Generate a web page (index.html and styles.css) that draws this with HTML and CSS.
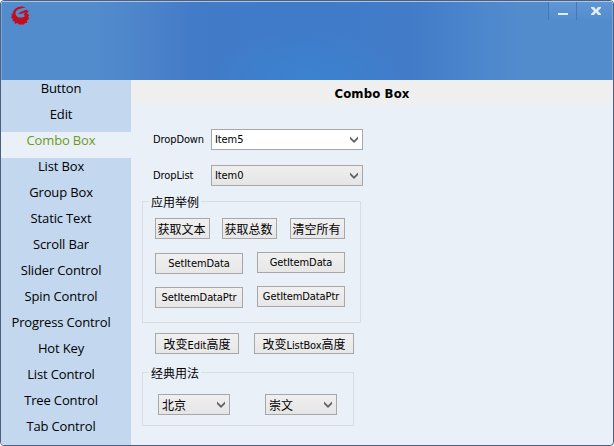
FILE: index.html
```html
<!DOCTYPE html>
<html lang="zh-CN">
<head>
<meta charset="utf-8">
<title>Combo Box</title>
<link rel="stylesheet" href="styles.css">
</head>
<body>
<div class="window">
  <header class="titlebar">
    <svg class="logo" width="20" height="20" viewBox="0 0 20 20">
      <path fill="#c40d1a" d="M16 1.500C12 -.3 7 .8 4.500 3.500C3 5 2.500 7 2.500 8.500L1 8L2 10L.8 11.500L3 13L2.500 15L4.500 15.500L5 18L7.500 17L9 18.500L14 18.500L15 17L17 17L17 14.500L19 13L18.300 10.500L19.300 9L17 7.500L19 4.500L17 5L17.500 3.500C14 4.500 11 5.500 8 7.500L10.500 8L15.500 6.500L13.500 8.500L15 10C13 12 8.500 12 6.500 10C4.500 7.500 5.500 5 8 3.500C10.500 2 13 2 16 1.500Z"/>
    </svg>
    <div class="controls">
      <button class="control min" aria-label="最小化"><svg width="28" height="20"><path d="M9 12h10v2H9z" fill="#deeefa"/></svg></button>
      <button class="control close" aria-label="关闭"><svg width="36" height="20"><path d="M14 6h3l2 2.500L21 6h3v1l-3 3L24 13v1h-3l-2-2.500L17 14h-3v-1l3-3L14 7z" fill="#deeefa"/></svg></button>
    </div>
  </header>
  <div class="body">
    <nav class="sidebar">
      <a>Button</a><a>Edit</a><a class="active">Combo Box</a><a>List Box</a><a>Group Box</a><a>Static Text</a><a>Scroll Bar</a><a>Slider Control</a><a>Spin Control</a><a>Progress Control</a><a>Hot Key</a><a>List Control</a><a>Tree Control</a><a>Tab Control</a>
    </nav>
    <main class="page">
      <h1>Combo Box</h1>
      <div class="form">
        <div class="field"><label>DropDown</label><div class="combo editable"><span>Item5</span><svg class="arrow" width="8" height="7"><path d="M0 0.500L4 4.500L8 0.500V3L4 7L0 3z"/></svg></div></div>
        <div class="field"><label>DropList</label><div class="combo"><span>Item0</span><svg class="arrow" width="8" height="7"><path d="M0 0.500L4 4.500L8 0.500V3L4 7L0 3z"/></svg></div></div>
        <fieldset class="group examples">
          <legend>应用举例</legend>
          <div class="row texts"><button class="btn cjk">获取文本</button><button class="btn cjk">获取总数</button><button class="btn cjk">清空所有</button></div>
          <div class="row data"><button class="btn">SetItemData</button><button class="btn">GetItemData</button></div>
          <div class="row data"><button class="btn">SetItemDataPtr</button><button class="btn">GetItemDataPtr</button></div>
        </fieldset>
        <div class="row heights"><button class="btn mixed"><b>改变</b>Edit<b>高度</b></button><button class="btn mixed wide"><b>改变</b>ListBox<b>高度</b></button></div>
        <fieldset class="group classic">
          <legend>经典用法</legend>
          <div class="row cities">
            <div class="combo cjk"><span>北京</span><svg class="arrow" width="8" height="7"><path d="M0 0.500L4 4.500L8 0.500V3L4 7L0 3z"/></svg></div>
            <div class="combo cjk"><span>崇文</span><svg class="arrow" width="8" height="7"><path d="M0 0.500L4 4.500L8 0.500V3L4 7L0 3z"/></svg></div>
          </div>
        </fieldset>
      </div>
    </main>
  </div>
</div>
</body>
</html>
```
FILE: styles.css
```css
* { box-sizing: border-box; }
body {
  margin: 0;
  background: #fff;
  color: #000;
  font: 11px/13px "DejaVu Sans Condensed", sans-serif;
  letter-spacing: -0.1px;
}
.window {
  display: flex;
  flex-direction: column;
  width: 614px;
  height: 446px;
  border: 1px solid #4d5f7e;
  border-radius: 4px;
  overflow: hidden;
  background: #e9f0f8;
}
.titlebar {
  display: flex;
  justify-content: space-between;
  flex: none;
  height: 79px;
  border-top: 1px solid #a9c6e9;
  border-left: 1px solid #79a5da;
  border-right: 1px solid #79a5da;
  background:
    radial-gradient(ellipse 95px 50px at 50% 100%, #3b83d0 0%, rgba(59, 131, 208, 0) 100%),
    linear-gradient(90deg, #538ccd 0%, #538ccd 15%, #4b82ca 25%, #427bc8 31%, #3f7bc9 50%, #427cc9 67%, #4a84cc 76%, #538ccd 85%, #538ccd 100%);
}
.logo { margin: 4px 0 0 8px; }
.controls { display: flex; height: 20px; }
.control {
  height: 18px;
  padding: 0;
  border: 0;
  border-left: 1px solid #4677b4;
  background: linear-gradient(#6096d5, #538ccd);
}
.control svg { display: block; margin-top: -1px; }
.min { width: 28px; }
.close { width: 36px; }
.body { display: flex; flex: 1; min-height: 0; }
.sidebar {
  flex: none;
  width: 130px;
  background: #c3d8ee;
  font: 13px/17px "Open Sans", sans-serif;
  letter-spacing: -0.15px;
  text-align: center;
}
.sidebar a { display: block; height: 26px; padding-right: 10px; white-space: nowrap; }
.sidebar .active { background: #e9f0f8; color: #6b9a20; }
.page { flex: 1; }
h1 {
  height: 25px;
  margin: 0;
  background: #efefef;
  font: bold 13px/27px "DejaVu Sans Condensed", sans-serif;
  letter-spacing: 0.15px;
  text-align: center;
}
.form { padding: 24px 0 0 11px; }
.field { display: flex; height: 21px; margin-bottom: 15px; padding-left: 11px; }
.field label { width: 58px; line-height: 21px; }
.field .combo { width: 152px; }
.combo {
  display: flex;
  justify-content: space-between;
  align-items: center;
  height: 21px;
  padding: 0 4px 0 3px;
  border: 1px solid #a7a7a7;
  background: linear-gradient(#efefef, #e5e5e5);
}
.combo.editable { background: #fff; }
.arrow { fill: #606060; }
.cjk, legend, .mixed b {
  font-family: "Noto Sans CJK SC", sans-serif;
  font-size: 12px;
  font-weight: normal;
  letter-spacing: 0;
}
.group { min-width: 0; margin: 0; padding: 0 0 0 12px; border: 1px solid #d7dde3; }
legend { height: 14px; margin-left: -6px; padding: 0 2px; line-height: 16px; }
.row { display: flex; }
.btn {
  height: 21px;
  padding: 0;
  border: 1px solid #a7a7a7;
  background: linear-gradient(#f0f0f0, #e7e7e7);
  color: #000;
  font: 11px/19px "DejaVu Sans Condensed", sans-serif;
  letter-spacing: -0.1px;
  white-space: nowrap;
}
.btn.cjk { padding-right: 2px; font: 12px/19px "Noto Sans CJK SC", sans-serif; letter-spacing: 0; }
.examples { width: 219px; height: 129px; margin-top: -7px; }
.texts { gap: 12px; margin-top: 10px; }
.texts .btn { width: 55px; }
.texts .btn:last-child { margin-left: 1px; }
.data { gap: 14px; margin-top: 13px; }
.data .btn { width: 88px; }
.data .btn:first-child { margin-top: 1px; }
.data + .data { margin-top: 12px; }
.heights { gap: 15px; margin: 10px 0 0 13px; }
.mixed { width: 84px; }
.mixed.wide { width: 100px; }
.classic { width: 212px; height: 61px; margin-top: 11px; padding-left: 15px; }
.classic legend { margin-left: -9px; }
.cities { gap: 35px; margin-top: 15px; }
.cities .combo { width: 72px; }
```
